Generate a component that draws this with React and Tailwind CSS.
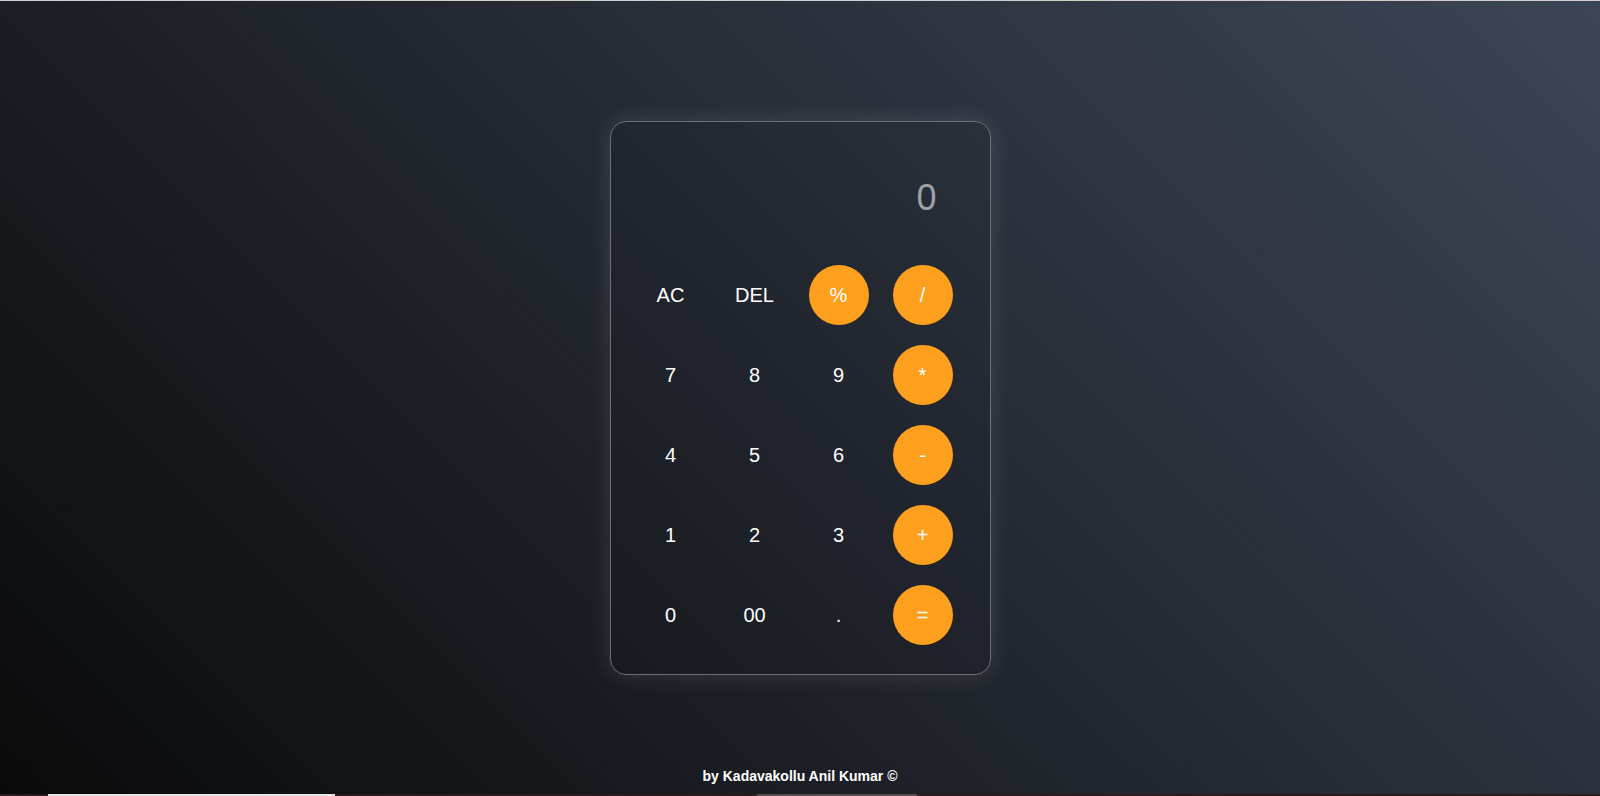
import React from "react";

// keypad rows: [label, isOperator]
const keys = [
  ["AC", false],
  ["DEL", false],
  ["%", true],
  ["/", true],
  ["7", false],
  ["8", false],
  ["9", false],
  ["*", true],
  ["4", false],
  ["5", false],
  ["6", false],
  ["-", true],
  ["1", false],
  ["2", false],
  ["3", false],
  ["+", true],
  ["0", false],
  ["00", false],
  [".", false],
  ["=", true],
];

const Key = ({ label, operator }) => (
  <button
    className={
      operator
        ? "w-[60px] h-[60px] rounded-full bg-[#fea01e] text-white text-[20px] flex items-center justify-center"
        : "w-[60px] h-[60px] rounded-full text-white text-[20px] flex items-center justify-center"
    }
  >
    {label}
  </button>
);

const Calculator = () => {
  return (
    <div className="w-[381px] rounded-[16px] border border-[#6c6f75] bg-black/[0.06] shadow-[0_0_22px_rgba(255,255,255,0.13)] pt-[40px] pb-[29px] pl-[30px]">
      {/* Display */}
      <div className="h-[72px] leading-[72px] text-right pr-[53px] text-[36px] text-[#9ea2a7] mb-[31px]">
        0
      </div>

      {/* Keypad */}
      <div className="grid grid-cols-[repeat(4,60px)] gap-x-[24px] gap-y-[20px]">
        {keys.map(([label, operator], i) => (
          <Key key={i} label={label} operator={operator} />
        ))}
      </div>
    </div>
  );
};

const App = () => {
  return (
    <div className="w-[1600px] h-[796px] flex flex-col font-['Liberation_Sans',Arial,sans-serif] overflow-hidden">
      <div className="h-[1px] bg-[#cfcfcf]" />
      <div className="flex-1 flex flex-col items-center bg-[linear-gradient(45deg,#0a0a0a,#3c4555)]">
        <div className="mt-[120px]">
          <Calculator />
        </div>
        <p className="mt-auto mb-[8px] text-[14px] leading-[20px] font-bold text-white">
          by Kadavakollu Anil Kumar ©
        </p>
      </div>
      {/* strip of the next section peeking in */}
      <div className="h-[2px] flex bg-[#2e1a1e]">
        <div className="w-[48px]" />
        <div className="w-[287px] bg-[#e6e6e6]" />
        <div className="w-[422px]" />
        <div className="w-[160px] bg-[#5a4a4d]" />
      </div>
    </div>
  );
};

export default App;
